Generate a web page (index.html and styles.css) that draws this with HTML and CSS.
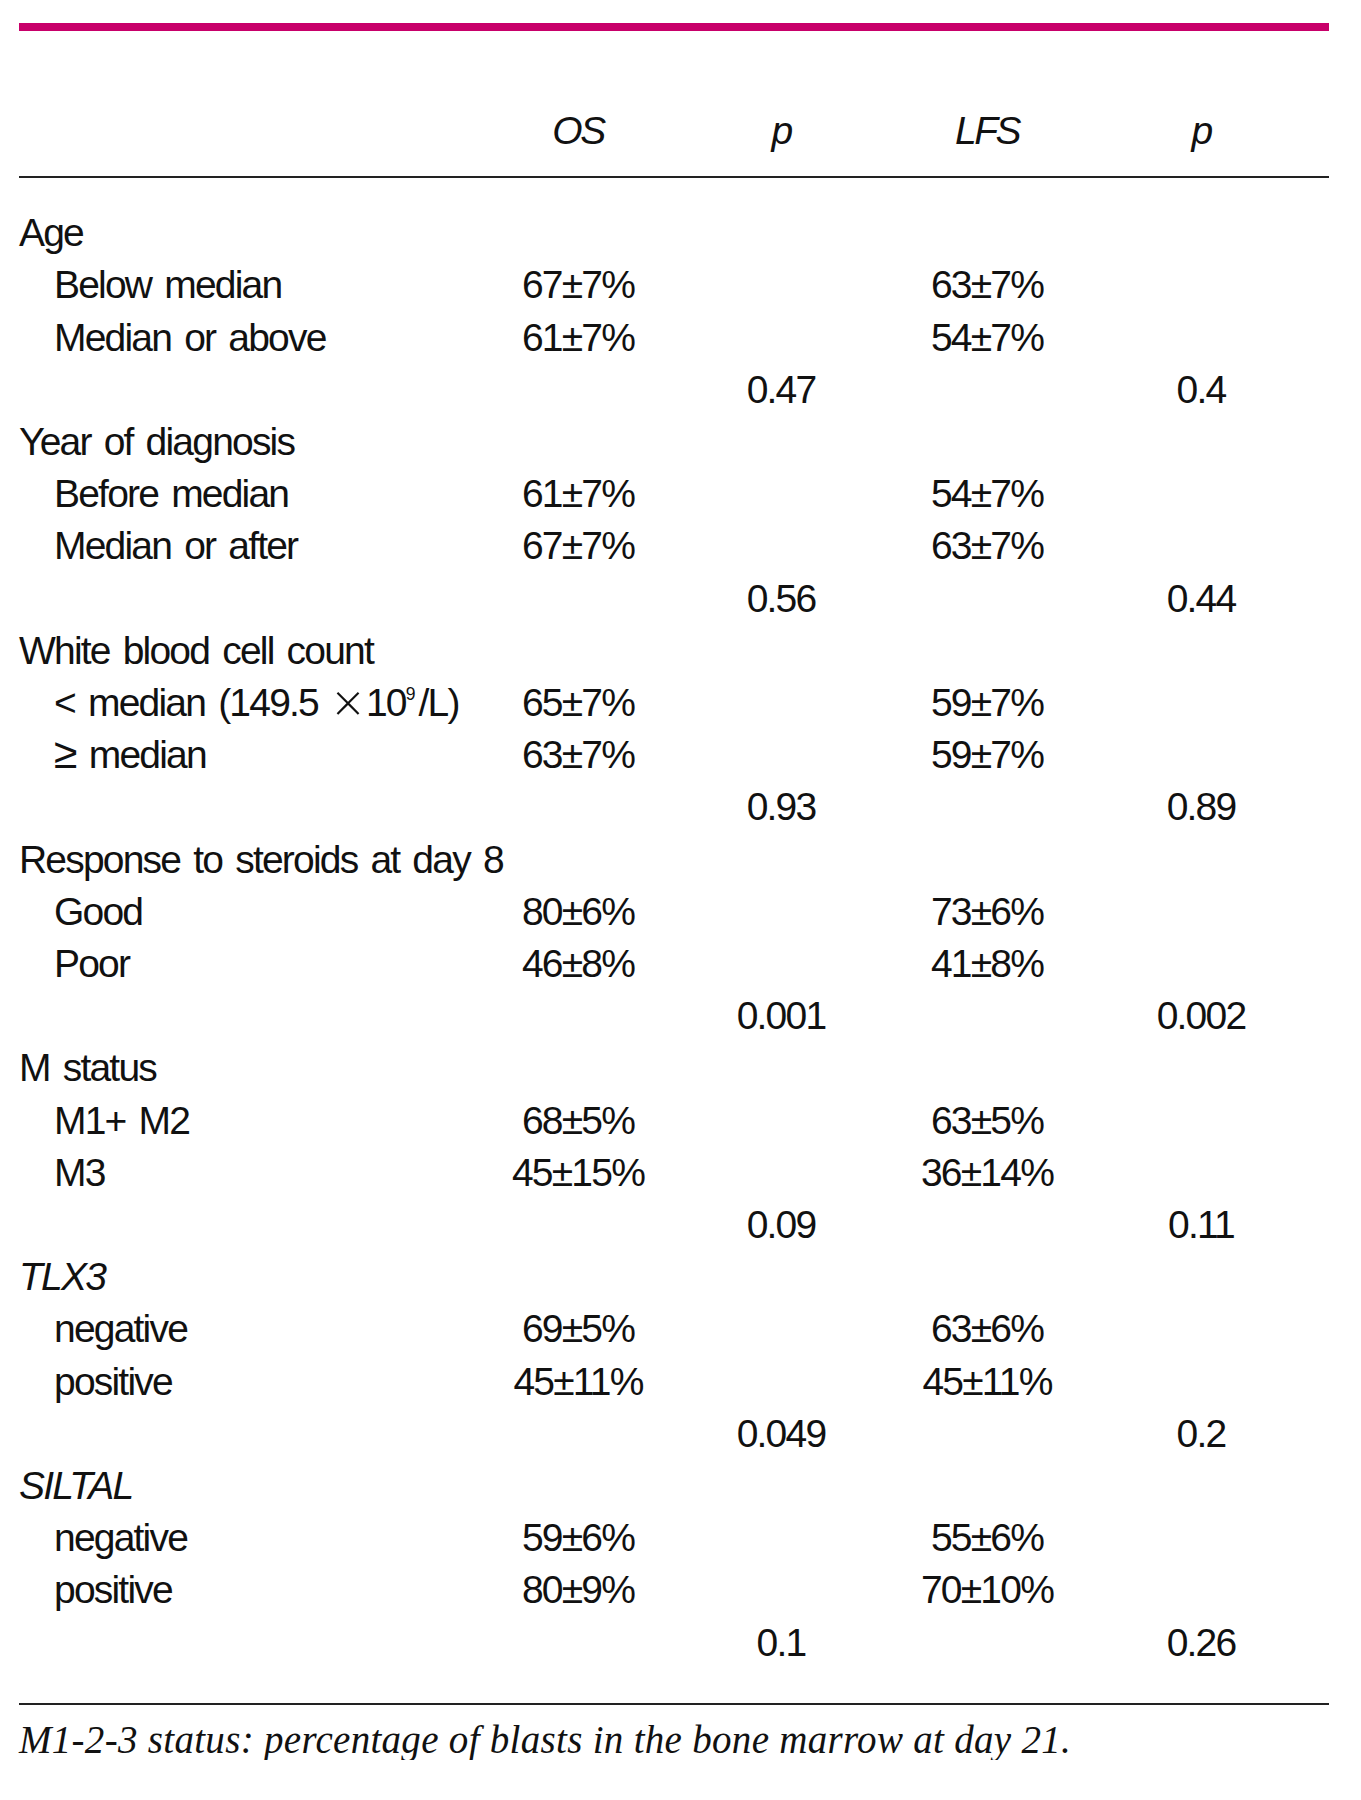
FILE: index.html
```html
<!DOCTYPE html>
<html lang="en">
<head>
<meta charset="utf-8">
<title>Survival by prognostic factor</title>
<link rel="stylesheet" href="styles.css">
</head>
<body>
<div class="page">
  <div class="bar"></div>
  <table class="tbl">
    <colgroup>
      <col class="c-label">
      <col class="c-os">
      <col class="c-p">
      <col class="c-lfs">
      <col class="c-p2">
      <col class="c-end">
    </colgroup>
    <thead>
      <tr>
        <th></th>
        <th class="h">OS</th>
        <th class="h">p</th>
        <th class="h">LFS</th>
        <th class="h">p</th>
        <th></th>
      </tr>
    </thead>
    <tbody>
      <tr class="first"><td class="grp">Age</td><td></td><td></td><td></td><td></td><td></td></tr>
      <tr><td class="sub">Below median</td><td class="v">67±7%</td><td></td><td class="v">63±7%</td><td></td><td></td></tr>
      <tr><td class="sub">Median or above</td><td class="v">61±7%</td><td></td><td class="v">54±7%</td><td></td><td></td></tr>
      <tr><td></td><td></td><td class="v">0.47</td><td></td><td class="v">0.4</td><td></td></tr>

      <tr><td class="grp">Year of diagnosis</td><td></td><td></td><td></td><td></td><td></td></tr>
      <tr><td class="sub">Before median</td><td class="v">61±7%</td><td></td><td class="v">54±7%</td><td></td><td></td></tr>
      <tr><td class="sub">Median or after</td><td class="v">67±7%</td><td></td><td class="v">63±7%</td><td></td><td></td></tr>
      <tr><td></td><td></td><td class="v">0.56</td><td></td><td class="v">0.44</td><td></td></tr>

      <tr><td class="grp">White blood cell count</td><td></td><td></td><td></td><td></td><td></td></tr>
      <tr><td class="sub">&lt; median (149.5 <span class="times">×</span>10<sup class="sup">9</sup>/L)</td><td class="v">65±7%</td><td></td><td class="v">59±7%</td><td></td><td></td></tr>
      <tr><td class="sub"><span class="ge">≥</span> median</td><td class="v">63±7%</td><td></td><td class="v">59±7%</td><td></td><td></td></tr>
      <tr><td></td><td></td><td class="v">0.93</td><td></td><td class="v">0.89</td><td></td></tr>

      <tr><td class="grp">Response to steroids at day 8</td><td></td><td></td><td></td><td></td><td></td></tr>
      <tr><td class="sub">Good</td><td class="v">80±6%</td><td></td><td class="v">73±6%</td><td></td><td></td></tr>
      <tr><td class="sub">Poor</td><td class="v">46±8%</td><td></td><td class="v">41±8%</td><td></td><td></td></tr>
      <tr><td></td><td></td><td class="v">0.001</td><td></td><td class="v">0.002</td><td></td></tr>

      <tr><td class="grp">M status</td><td></td><td></td><td></td><td></td><td></td></tr>
      <tr><td class="sub">M1+ M2</td><td class="v">68±5%</td><td></td><td class="v">63±5%</td><td></td><td></td></tr>
      <tr><td class="sub">M3</td><td class="v">45±15%</td><td></td><td class="v">36±14%</td><td></td><td></td></tr>
      <tr><td></td><td></td><td class="v">0.09</td><td></td><td class="v">0.11</td><td></td></tr>

      <tr><td class="grp it">TLX3</td><td></td><td></td><td></td><td></td><td></td></tr>
      <tr><td class="sub">negative</td><td class="v">69±5%</td><td></td><td class="v">63±6%</td><td></td><td></td></tr>
      <tr><td class="sub">positive</td><td class="v">45±11%</td><td></td><td class="v">45±11%</td><td></td><td></td></tr>
      <tr><td></td><td></td><td class="v">0.049</td><td></td><td class="v">0.2</td><td></td></tr>

      <tr><td class="grp it">SILTAL</td><td></td><td></td><td></td><td></td><td></td></tr>
      <tr><td class="sub">negative</td><td class="v">59±6%</td><td></td><td class="v">55±6%</td><td></td><td></td></tr>
      <tr><td class="sub">positive</td><td class="v">80±9%</td><td></td><td class="v">70±10%</td><td></td><td></td></tr>
      <tr class="last"><td></td><td></td><td class="v">0.1</td><td></td><td class="v">0.26</td><td></td></tr>
    </tbody>
  </table>
  <p class="note">M1-2-3 status: percentage of blasts in the bone marrow at day 21.</p>
</div>
</body>
</html>
```

FILE: styles.css
```css
html, body {
  margin: 0;
  padding: 0;
  background: #ffffff;
}

.page {
  padding-left: 19px;
  width: 1310px;
  color: #111111;
}

.bar {
  margin-top: 23px;
  height: 8px;
  background: #c8006a;
}

.tbl {
  border-collapse: collapse;
  table-layout: fixed;
  width: 1310px;
  font-family: "Liberation Sans", Arial, sans-serif;
  font-size: 39px;
  letter-spacing: -1.8px;
  word-spacing: 4px;
  line-height: 52.2px;
}

.c-label { width: 459px; }
.c-os { width: 200px; }
.c-p { width: 206px; }
.c-lfs { width: 206px; }
.c-p2 { width: 222px; }
.c-end { width: 17px; }

.tbl th,
.tbl td {
  padding: 0;
  white-space: nowrap;
  text-align: left;
  font-weight: normal;
}

.tbl thead th {
  padding-top: 74px;
  padding-bottom: 19px;
  border-bottom: 2px solid #222222;
}

.tbl th.h {
  font-style: italic;
  text-align: center;
  letter-spacing: -2.5px;
}

.tbl tr.first td {
  padding-top: 29px;
}

.tbl tr.last td {
  padding-bottom: 34px;
  border-bottom: 2px solid #222222;
}

.grp {
  padding-left: 1px;
}

.tbl td.sub {
  padding-left: 35px;
}

.it {
  font-style: italic;
}

.tbl td.v {
  text-align: center;
}

.times {
  font-family: Inter, "DejaVu Sans", sans-serif;
  font-weight: 200;
  font-size: 1.35em;
  line-height: 0;
  letter-spacing: 0;
  margin-right: 1px;
  vertical-align: -0.04em;
}

.ge {
  font-size: 1.1em;
  line-height: 0;
}

.sup {
  font-size: 0.45em;
  vertical-align: 0.9em;
  line-height: 0;
  letter-spacing: 0;
  margin-right: 3px;
}

.note {
  margin: 15px 0 0 0;
  font-family: "Liberation Serif", "Times New Roman", serif;
  font-style: italic;
  font-size: 39px;
  letter-spacing: 0.3px;
  line-height: 40px;
  color: #111111;
}
```
